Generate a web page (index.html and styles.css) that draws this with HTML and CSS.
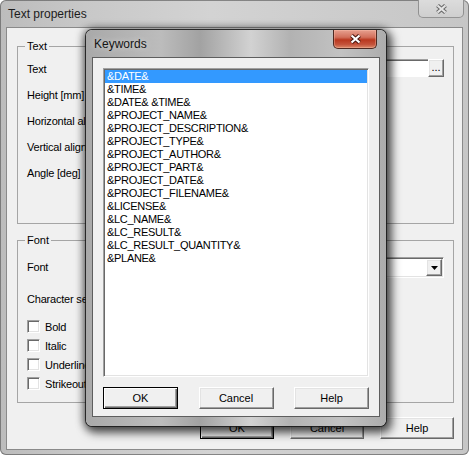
FILE: index.html
```html
<!DOCTYPE html>
<html>
<head>
<meta charset="utf-8">
<title>Text properties</title>
<link rel="stylesheet" href="styles.css">
</head>
<body>
<div class="win">
  <div class="titlebar">
    <span class="title">Text properties</span>
    <span class="close close-inactive">
      <svg width="13" height="10" viewBox="0 0 13 10"><path d="M2.5 1.5 L10.5 8.5 M10.5 1.5 L2.5 8.5" stroke="#6a6a6a" stroke-width="4.2"/><path d="M2.5 1.5 L10.5 8.5 M10.5 1.5 L2.5 8.5" stroke="#e4e4e4" stroke-width="2.2"/></svg>
    </span>
  </div>
  <div class="client">
    <fieldset class="group group-text">
      <legend>Text</legend>
      <div class="row"><span class="lbl">Text</span><span class="field"><span class="edit"></span><span class="raised dots">...</span></span></div>
      <div class="row"><span class="lbl">Height [mm]</span></div>
      <div class="row"><span class="lbl">Horizontal alignment</span></div>
      <div class="row"><span class="lbl">Vertical alignment</span></div>
      <div class="row"><span class="lbl">Angle [deg]</span></div>
    </fieldset>
    <fieldset class="group group-font">
      <legend>Font</legend>
      <div class="row"><span class="lbl">Font</span><span class="combo"><span class="raised drop"><svg width="7" height="4" viewBox="0 0 7 4"><path d="M0 0 H7 L3.5 4 Z" fill="#000"/></svg></span></span></div>
      <div class="row row2"><span class="lbl">Character set</span></div>
      <div class="checks">
        <label class="chk"><span class="box"></span>Bold</label>
        <label class="chk"><span class="box"></span>Italic</label>
        <label class="chk"><span class="box"></span>Underline</label>
        <label class="chk"><span class="box"></span>Strikeout</label>
      </div>
    </fieldset>
    <div class="buttons">
      <button class="btn btn-default">OK</button>
      <button class="btn">Cancel</button>
      <button class="btn">Help</button>
    </div>
  </div>

  <div class="dlg">
    <div class="titlebar dlg-title">
      <span class="title">Keywords</span>
      <span class="close close-red">
        <svg width="13" height="10" viewBox="0 0 13 10"><path d="M2.5 1.5 L10.5 8.5 M10.5 1.5 L2.5 8.5" stroke="#4a1810" stroke-width="4.2"/><path d="M2.5 1.5 L10.5 8.5 M10.5 1.5 L2.5 8.5" stroke="#ffffff" stroke-width="2.2"/></svg>
      </span>
    </div>
    <div class="dlg-client">
      <ul class="list">
        <li class="sel">&amp;DATE&amp;</li>
        <li>&amp;TIME&amp;</li>
        <li>&amp;DATE&amp; &amp;TIME&amp;</li>
        <li>&amp;PROJECT_NAME&amp;</li>
        <li>&amp;PROJECT_DESCRIPTION&amp;</li>
        <li>&amp;PROJECT_TYPE&amp;</li>
        <li>&amp;PROJECT_AUTHOR&amp;</li>
        <li>&amp;PROJECT_PART&amp;</li>
        <li>&amp;PROJECT_DATE&amp;</li>
        <li>&amp;PROJECT_FILENAME&amp;</li>
        <li>&amp;LICENSE&amp;</li>
        <li>&amp;LC_NAME&amp;</li>
        <li>&amp;LC_RESULT&amp;</li>
        <li>&amp;LC_RESULT_QUANTITY&amp;</li>
        <li>&amp;PLANE&amp;</li>
      </ul>
      <div class="dlg-buttons">
        <button class="btn btn-default">OK</button>
        <button class="btn">Cancel</button>
        <button class="btn">Help</button>
      </div>
    </div>
  </div>
</div>
</body>
</html>
```

FILE: styles.css
```css
* { box-sizing: border-box; }
html, body { margin: 0; padding: 0; }
body {
  width: 469px;
  height: 455px;
  overflow: hidden;
  background: #ffffff;
  font-family: "Liberation Sans", Arial, sans-serif;
  font-size: 11px;
  color: #000;
}

.win {
  position: relative;
  width: 469px;
  height: 455px;
  border-radius: 6px;
  padding: 0 7px 6px 7px;
  display: flex;
  flex-direction: column;
  background: linear-gradient(90deg, #bcbcbc 0%, #c8c8c8 18%, #d3d3d3 45%, #cdcdcd 70%, #c6c6c6 100%);
  box-shadow: inset 0 0 0 1px rgba(70, 70, 70, 0.55);
}

.titlebar {
  height: 28px;
  flex: none;
  display: flex;
  justify-content: space-between;
  align-items: flex-start;
}
.title {
  padding-left: 1px;
  line-height: 28px;
  font-size: 12px;
  color: #1c1c1c;
  letter-spacing: 0;
}

.close {
  display: flex;
  align-items: center;
  justify-content: center;
  border-radius: 0 0 5px 5px;
}
.close-inactive {
  width: 46px;
  height: 18px;
  margin-right: -2px;
  border: 1px solid rgba(90, 90, 90, 0.55);
  border-top: none;
  background: linear-gradient(#dcdcdc, #cfcfcf);
}
.close-red {
  width: 44px;
  height: 19px;
  margin-right: 2px;
  border: 1px solid #4e2a22;
  border-top: none;
  background: linear-gradient(#e7a08f 0%, #d2705c 40%, #b9381f 55%, #c4523a 80%, #db8a6a 100%);
  box-shadow: inset 0 0 0 1px rgba(255, 200, 180, 0.35);
}

.client {
  height: 421px;
  flex: none;
  background: #f0f0f0;
  padding: 12px 8px 0 10px;
  display: flex;
  flex-direction: column;
  box-shadow: 0 0 0 1px #8a8a8a;
}

.group {
  margin: 0;
  padding: 3px 9px 0 9px;
  border: 1px solid #a5a5a5;
  min-width: 0;
}
.group legend {
  padding: 0 2px;
  margin-left: -2px;
  line-height: 13px;
  font-size: 11px;
}
.group-text { height: 184px; }
.group-font { height: 169px; margin-top: 10px; padding-top: 7px; }

.row {
  height: 26px;
  display: flex;
  align-items: center;
}
.row2 { margin-top: 6px; }
.lbl {
  width: 100px;
  flex: none;
  white-space: nowrap;
  letter-spacing: -0.2px;
}

.field {
  flex: 1;
  height: 18px;
  display: flex;
  margin-top: -2px;
}
.edit {
  flex: 1;
  background: #fff;
  border-top: 1px solid #a0a0a0;
  border-left: 1px solid #a0a0a0;
  border-bottom: 1px solid #ffffff;
  border-right: none;
  box-shadow: inset 1px 1px 0 #696969;
}

.raised {
  background: #f0f0f0;
  border-top: 1px solid #ffffff;
  border-left: 1px solid #ffffff;
  border-right: 1px solid #696969;
  border-bottom: 1px solid #696969;
  box-shadow: inset -1px -1px 0 #a0a0a0, inset 1px 1px 0 #e3e3e3;
}
.dots {
  width: 16px;
  height: 18px;
  display: flex;
  align-items: flex-end;
  justify-content: center;
  line-height: 13px;
  padding-bottom: 2px;
  font-size: 11px;
  letter-spacing: 0;
}

.combo {
  flex: 1;
  height: 21px;
  display: flex;
  justify-content: flex-end;
  padding: 2px 1px 2px 2px;
  background: #fff;
  border-top: 1px solid #a0a0a0;
  border-left: 1px solid #a0a0a0;
  border-bottom: 1px solid #ffffff;
  border-right: 1px solid #ffffff;
  box-shadow: inset 1px 1px 0 #696969, inset -1px -1px 0 #e3e3e3;
  margin-top: 1px;
}
.drop {
  width: 16px;
  height: 17px;
  margin-top: -1px;
  display: flex;
  align-items: center;
  justify-content: center;
}

.checks {
  margin-top: 5px;
  display: flex;
  flex-direction: column;
}
.chk {
  height: 19px;
  display: flex;
  align-items: center;
  gap: 5px;
  letter-spacing: -0.2px;
  white-space: nowrap;
}
.box {
  width: 13px;
  height: 13px;
  flex: none;
  background: #fff;
  border-top: 1px solid #a0a0a0;
  border-left: 1px solid #a0a0a0;
  border-bottom: 1px solid #ffffff;
  border-right: 1px solid #ffffff;
  box-shadow: inset 1px 1px 0 #696969, inset -1px -1px 0 #e3e3e3;
}

.buttons {
  display: flex;
  justify-content: flex-end;
  gap: 16px;
  margin-top: 14px;
}
.btn {
  width: 74px;
  height: 22px;
  margin: 0;
  padding: 0;
  font-family: inherit;
  font-size: 11px;
  color: #000;
  background: #f0f0f0;
  border-style: solid;
  border-width: 1px;
  border-color: #ffffff #696969 #696969 #ffffff;
  box-shadow: inset -1px -1px 0 #a0a0a0, inset 1px 1px 0 #e3e3e3;
  border-radius: 0;
}
.btn-default {
  border-color: #000;
  box-shadow: inset 1px 1px 0 #ffffff, inset -1px -1px 0 #696969, inset -2px -2px 0 #a0a0a0;
}

.dlg {
  position: absolute;
  left: 86px;
  top: 30px;
  width: 300px;
  height: 396px;
  border-radius: 6px;
  padding: 0 7px 10px 7px;
  display: flex;
  flex-direction: column;
  background: linear-gradient(90deg, #a9a9a9 0%, #bcbcbc 25%, #a2a2a2 38%, #d2d2d2 55%, #b2b2b2 68%, #c2c2c2 85%, #acacac 100%);
  box-shadow: 0 0 0 1px rgba(25, 25, 25, 0.85), 3px 4px 10px 3px rgba(0, 0, 0, 0.62), -1px 0 8px 2px rgba(0, 0, 0, 0.35);
}
.dlg-title .title {
  color: #141414;
  text-shadow: 0 0 6px rgba(255, 255, 255, 0.6);
}
.dlg-client {
  flex: 1;
  background: #f0f0f0;
  padding: 10px 10px 7px 10px;
  display: flex;
  flex-direction: column;
  box-shadow: 0 0 0 1px #5e5e5e;
}
.list {
  height: 309px;
  flex: none;
  margin: 0;
  list-style: none;
  overflow: hidden;
  background: #fff;
  border-top: 1px solid #a0a0a0;
  border-left: 1px solid #a0a0a0;
  border-bottom: 1px solid #ffffff;
  border-right: 1px solid #ffffff;
  box-shadow: inset 1px 1px 0 #696969, inset -1px -1px 0 #e3e3e3;
  padding: 1px;
}
.list li {
  height: 13px;
  line-height: 13px;
  padding-left: 2px;
  white-space: pre;
  letter-spacing: -0.3px;
}
.list li.sel {
  background: #3399ff;
  color: #fff;
}
.dlg-buttons {
  display: flex;
  justify-content: space-between;
  margin-top: 10px;
}
.dlg-buttons .btn { width: 75px; }
```
